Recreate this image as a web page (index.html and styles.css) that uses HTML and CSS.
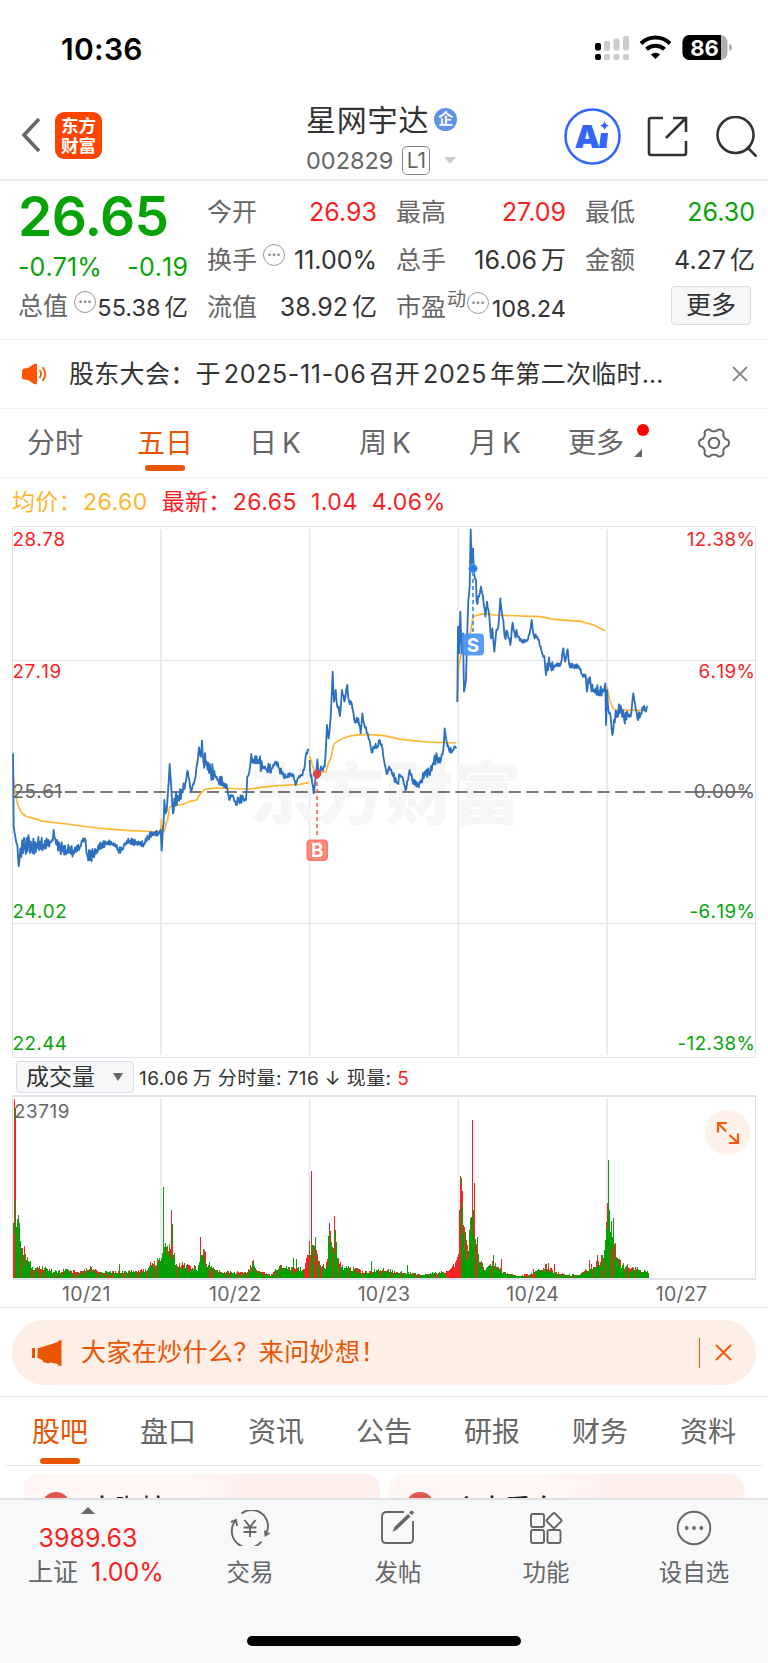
FILE: index.html
```
<!DOCTYPE html>
<html lang="zh-CN">

<head>
    <meta charset="UTF-8">
    <meta name="viewport" content="width=device-width, initial-scale=1.0">
    <title>星网宇达 002829</title>
    <link rel="stylesheet" href="styles.css">
</head>

<body>
    <div class="app">
        <div class="status-bar">
            <div class="time">10:36</div>
            <svg class="status-icons" width="140" height="28" viewBox="594 35 140 28">
                <g fill="#ccc">
                    <rect x="604" y="42" width="6" height="10" rx="2" />
                    <rect x="613.5" y="39.500" width="6" height="12" rx="2" />
                    <rect x="623" y="37" width="6" height="14.500" rx="2" />
                    <rect x="604" y="55" width="6" height="6" rx="2" />
                    <rect x="613.5" y="55" width="6" height="6" rx="2" />
                    <rect x="623" y="55" width="6" height="6" rx="2" />
                </g>
                <rect x="595" y="44" width="6" height="7.500" rx="2" />
                <rect x="595" y="55" width="6" height="6" rx="2" />
                <g fill="none" stroke="#000" stroke-width="4">
                    <path d="M641 44.500a20.500 20.500 0 0 1 29 0" />
                    <path d="M646.500 50.300a13 13 0 0 1 18 0" />
                </g>
                <path d="M655.500 60l-4.600-4.500a6.600 6.600 0 0 1 9.200 0z" />
                <rect x="682.500" y="36" width="45" height="25" rx="7" fill="#b0b0b0" />
                <path d="M689.500 36H721v25h-31.500a7 7 0 0 1-7-7V43a7 7 0 0 1 7-7z" />
                <path d="M729 45q3 1 3 3.500t-3 3.500z" fill="#b0b0b0" />
                <text x="704.500" y="56.500" class="battery-text" text-anchor="middle">86</text>
            </svg>
        </div>

        <div class="header">
            <div class="header-left">
                <svg width="20" height="36" viewBox="0 0 20 36">
                    <path d="M18 2L3 18l15 16" fill="none" stroke="#666" stroke-width="3.600" />
                </svg>
                <div class="logo">东方<br>财富</div>
            </div>
            <div class="stock">
                <div class="stock-name">星网宇达<span class="badge-qi">企</span></div>
                <div class="stock-code">002829<span class="level">L1</span><i class="caret"></i></div>
            </div>
            <div class="header-right">
                <svg width="57" height="57" viewBox="0 0 57 57" fill="#3366ff">
                    <circle cx="28.500" cy="28.500" r="27" fill="none" stroke="#3366ff" stroke-width="2.600" />
                    <text x="10.500" y="39.500" class="ai-text">A</text>
                    <path d="M37 25h7l-1.500 15h-7.500z" />
                    <path d="M40.500 13q1 4 4.500 4.500q-3.500 1-4.500 4.500q-1-3.500-4.500-4.500q3.500-.5 4.500-4.500z" />
                </svg>
                <svg class="share" width="41" height="41" viewBox="0 0 41 41" fill="none" stroke="#333" stroke-width="2.600">
                    <path d="M16 2H4Q2 2 2 4v33q0 2 2 2h33q2 0 2-2V25M26 2h13v14M39 2L19 22" />
                </svg>
                <svg width="41" height="41" viewBox="0 0 41 41" fill="none" stroke="#333" stroke-width="2.600">
                    <circle cx="19.500" cy="19" r="18" />
                    <path d="M31 31l9.500 9.500" />
                </svg>
            </div>
        </div>

        <div class="quote">
            <div class="col">
                <div class="price green">26.65</div>
                <div class="row row-change green"><span>-0.71%</span><span>-0.19</span></div>
                <div class="row"><span class="label">总值<i class="more-dot">•••</i></span><span class="small">55.38<b>亿</b></span></div>
            </div>
            <div class="col">
                <div class="row"><span class="label">今开</span><span class="red">26.93</span></div>
                <div class="row"><span class="label">换手<i class="more-dot">•••</i></span><span>11.00%</span></div>
                <div class="row"><span class="label">流值</span><span>38.92<b>亿</b></span></div>
            </div>
            <div class="col">
                <div class="row"><span class="label">最高</span><span class="red">27.09</span></div>
                <div class="row"><span class="label">总手</span><span>16.06<b>万</b></span></div>
                <div class="row"><span class="label">市盈<sup>动</sup><i class="more-dot pe">•••</i></span><span class="small">108.24</span></div>
            </div>
            <div class="col">
                <div class="row"><span class="label">最低</span><span class="green">26.30</span></div>
                <div class="row"><span class="label">金额</span><span>4.27<b>亿</b></span></div>
                <div class="row row-btn"><span class="more-btn">更多</span></div>
            </div>
        </div>

        <div class="notice">
            <svg width="28" height="24" viewBox="0 0 28 24">
                <path d="M1 9q0-2 2-2.500L7 6l6-4q3-1 3 1v18q0 2-3 1l-6-4-4-.5q-2 0-2-2z" fill="#ff5500" />
                <path d="M18.500 8q3 4 0 8M21.500 5q5.500 7 0 14" fill="none" stroke="#ff5500" stroke-width="1.800" />
            </svg>
            <div class="notice-text">股东大会：于<em>2025-11-06</em>召开<em>2025</em>年第二次临时…</div>
            <svg width="16" height="16" viewBox="0 0 16 16">
                <path d="M1 1l14 14M15 1L1 15" stroke="#888" stroke-width="1.800" />
            </svg>
        </div>

        <div class="period-tabs">
            <div class="period">分时</div>
            <div class="period active">五日</div>
            <div class="period">日<em>K</em></div>
            <div class="period">周<em>K</em></div>
            <div class="period">月<em>K</em></div>
            <div class="period">更多<i class="corner"></i></div>
            <div class="period">
                <svg width="34" height="34" viewBox="-17 -17 34 34" fill="none" stroke="#666" stroke-width="2">
                    <circle r="5.200" />
                    <path id="gear" stroke-linejoin="round" />
                </svg>
            </div>
        </div>

        <div class="legend"><span class="orange">均价：<em>26.60</em></span><span class="red">最新：<em>26.65</em><em>1.04</em><em>4.06%</em></span></div>

        <svg class="chart" width="768" height="532" viewBox="0 526 768 532">
            <g class="grid">
                <path d="M12.500 526.500H755.500V1057.500H12.500z" />
                <path d="M13 660.500H755M13 923.500H755" />
                <path d="M161 529V1055M309.500 529V1055M458.500 529V1055M607 529V1055" class="grid-day" />
            </g>
            <text x="385" y="819" class="watermark" text-anchor="middle">东方财富</text>
            <path d="M13 792H62" class="zero" />
            <path d="M65 792H693" class="zero" stroke-dasharray="12 5.750" />
            <path d="M685 792H748" class="zero" />
            <g transform="translate(0 400) scale(.33333)">
                <g id="avg" class="avg"></g>
                <g id="price" class="price-line"></g>
            </g>
            <path d="M317 775V838" stroke="#ff5b4d" stroke-width="1.600" stroke-dasharray="4 3" />
            <circle cx="317" cy="774" r="4.200" fill="#e04545" />
            <rect x="306.500" y="839.500" width="21.500" height="21.500" rx="4" fill="#ff7b6b" />
            <rect x="309.300" y="842.300" width="16" height="16" rx="3" class="mark-ring" />
            <text x="317.300" y="857" class="mark" text-anchor="middle">B</text>
            <path d="M473 572V633" stroke="#4a90f5" stroke-width="1.800" stroke-dasharray="4 3" />
            <circle cx="473" cy="568.500" r="4.400" fill="#2a7df0" stroke="#9cc4ff" stroke-width=".6" />
            <rect x="462" y="633.500" width="22" height="22" rx="4" fill="#4a94f8" fill-opacity=".92" />
            <text x="473" y="651.500" class="mark" text-anchor="middle">S</text>
            <g class="axis">
                <text x="12.500" y="545.500" class="up">28.78</text>
                <text x="12.500" y="678" class="up">27.19</text>
                <text x="12.500" y="798">25.61</text>
                <text x="12.500" y="917.500" class="down">24.02</text>
                <text x="12.500" y="1049.500" class="down">22.44</text>
                <g text-anchor="end">
                    <text x="755.500" y="545.500" class="up">12.38%</text>
                    <text x="755.500" y="678" class="up">6.19%</text>
                    <text x="755.500" y="798">0.00%</text>
                    <text x="755.500" y="917.500" class="down">-6.19%</text>
                    <text x="755.500" y="1049.500" class="down">-12.38%</text>
                </g>
            </g>
        </svg>

        <div class="vol-head">
            <div class="select">成交量<i class="arrow"></i></div>
            <div class="vol-text">16.06<b>万</b> 分时量: 716 ↓ 现量: <span class="red">5</span></div>
        </div>

        <div class="volume">
            <svg class="chart" width="768" height="185" viewBox="0 1095 768 185">
                <g class="grid">
                    <path d="M161 1098.500V1278M309.500 1098.500V1278M458.500 1098.500V1278M607 1098.500V1278" class="grid-day" />
                    <path d="M12.500 1096V1279M755.500 1096V1279" />
                    <path d="M12 1096H756M12 1279H756" class="grid-edge" />
                </g>
                <g id="bars" shape-rendering="crispEdges"></g>
                <text x="14" y="1118" class="vol-max">23719</text>
            </svg>
            <div class="expand">
                <svg width="24" height="24" viewBox="0 0 24 24" fill="none" stroke="#f25c0c" stroke-width="2.200">
                    <path d="M11 2H2v9.500M2 2l8 8.500M13 22h9v-9.500M22 22l-8.500-8" />
                </svg>
            </div>
        </div>
        <div class="dates">
            <span>10/21</span><span>10/22</span><span>10/23</span><span>10/24</span><span>10/27</span>
        </div>

        <div class="ask-wrap">
            <div class="ask">
                <svg width="31" height="28" viewBox="0 0 31 28" fill="#ea5504">
                    <path d="M0 9h3v10H0zM5.500 9.500L26 3V2l3-1h.5v26l-3.500-.5V25l-8-1.500-1.500 1-5.500-1.500-.5-2L5.500 19z" />
                </svg>
                <span class="ask-text">大家在炒什么？来问妙想！</span>
                <i class="ask-line"></i>
                <svg width="17" height="17" viewBox="0 0 17 17">
                    <path d="M1 1l15 15M16 1L1 16" stroke="#f25c0c" stroke-width="2" />
                </svg>
            </div>
        </div>

        <div class="info-tabs">
            <div class="info active">股吧</div>
            <div class="info">盘口</div>
            <div class="info">资讯</div>
            <div class="info">公告</div>
            <div class="info">研报</div>
            <div class="info">财务</div>
            <div class="info">资料</div>
        </div>

        <div class="cards">
            <div class="card"><i class="card-dot"></i><span>大咖榜</span></div>
            <div class="card"><i class="card-dot"></i><span>个大看盘</span></div>
        </div>

        <div class="bottom">
            <div class="nav">
                <div class="index">
                    <i class="tri"></i>
                    <div class="index-value red">3989.63</div>
                    <div class="index-name">上证<span class="red">1.00%</span></div>
                </div>
                <div class="nav-item">
                    <svg width="40" height="36" viewBox="0 0 40 36" fill="none" stroke="#666" stroke-width="1.900">
                        <path d="M11.500 3.500A16.300 16.300 0 0 1 36 24M31.500 31.500A16.300 16.300 0 0 1 5.500 10.500" />
                        <path d="M1 12l5-2 1 6M39.500 23l-4 2.500-.5-5" />
                        <path d="M14.500 10l5.500 7 5.500-7M20 17v10M13.500 17.500h13M13.500 22h13" />
                    </svg>
                    <span>交易</span>
                </div>
                <div class="nav-item">
                    <svg width="36" height="36" viewBox="0 0 36 36" fill="none" stroke="#666" stroke-width="1.900">
                        <path d="M24 2H7Q2 2 2 7v22q0 4 4 4h23q4 0 4-4V11" />
                        <path d="M12.500 22l2-5L28 4l2.500 2.500L17 19.500z" fill="#666" stroke="none" />
                        <path d="M29 3l1.500-2q2.500-1 3.500 1.500L32 5z" fill="#666" stroke="none" />
                    </svg>
                    <span>发帖</span>
                </div>
                <div class="nav-item">
                    <svg width="34" height="36" viewBox="0 0 34 36" fill="none" stroke="#666" stroke-width="1.900">
                        <rect x="2" y="4" width="13" height="13" rx="2" />
                        <rect x="2" y="20" width="13" height="13" rx="2" />
                        <rect x="18.500" y="20" width="13" height="13" rx="2" />
                        <path d="M24 3.500q1-1 2 0l6 6q1 1 0 2l-6 6q-1 1-2 0l-6-6q-1-1 0-2z" />
                    </svg>
                    <span>功能</span>
                </div>
                <div class="nav-item">
                    <svg width="36" height="36" viewBox="0 0 36 36" fill="#666">
                        <circle cx="18" cy="18" r="16.300" fill="none" stroke="#666" stroke-width="1.900" />
                        <circle cx="10.700" cy="18" r="1.900" />
                        <circle cx="18" cy="18" r="1.900" />
                        <circle cx="25.300" cy="18" r="1.900" />
                    </svg>
                    <span>设自选</span>
                </div>
            </div>
            <div class="home-bar"></div>
        </div>
    </div>
    <script src="chart.js"></script>
</body>

</html>
```
FILE: styles.css
```
* {
    box-sizing: border-box;
}

body {
    margin: 0;
    background-color: #fff;
    color: #333;
    font-family: Inter, "Noto Sans CJK SC", sans-serif;
    font-size: 25px;
    line-height: 1;
}

i,
em {
    font-style: normal;
}

b {
    font-weight: 400;
    margin-left: 4px;
}

svg {
    display: block;
    flex-shrink: 0;
}

.red {
    color: #fa1e1e;
}

.green {
    color: #06a306;
}

.orange {
    color: #ffb52e;
}

.app {
    width: 768px;
    height: 1663px;
    overflow: hidden;
    display: flex;
    flex-direction: column;
}

.app > * {
    flex-shrink: 0;
}

/* status bar */
.status-bar {
    height: 96px;
    padding: 34px 34px 0 61px;
    display: flex;
    justify-content: space-between;
    color: #000;
}

.time {
    font-size: 30px;
    font-weight: 600;
    line-height: 30px;
    letter-spacing: .3px;
}

.battery-text {
    font-size: 22px;
    font-weight: 700;
    fill: #fff;
}

/* header */
.header {
    height: 85px;
    border-bottom: 2px solid #ebebeb;
    display: grid;
    grid-template-columns: 306px 1fr auto;
}

.header-left {
    display: flex;
    gap: 14px;
    padding: 16px 0 0 21px;
}

.header-left svg {
    margin-top: 5px;
}

.logo {
    width: 47px;
    height: 47px;
    padding-top: 4px;
    border-radius: 9px;
    background-color: #ff4400;
    color: #fff;
    font-size: 17.500px;
    font-weight: 700;
    line-height: 19.500px;
    text-align: center;
}

.stock-name {
    display: flex;
    align-items: center;
    gap: 5px;
    height: 47px;
    font-size: 30px;
    letter-spacing: .8px;
}

.badge-qi {
    width: 23px;
    height: 23px;
    border-radius: 50%;
    background-color: #6190e8;
    color: #fff;
    font-size: 15px;
    font-weight: 700;
    line-height: 22px;
    letter-spacing: 0;
    text-align: center;
}

.stock-code {
    display: flex;
    align-items: center;
    height: 29px;
    margin-top: 3px;
    color: #666;
    font-size: 23.500px;
}

.level {
    width: 28px;
    height: 29px;
    margin-left: 9px;
    border: 1px solid #888;
    border-radius: 5px;
    font-size: 21px;
    line-height: 28px;
    text-align: center;
}

.caret {
    margin-left: 14px;
    border: 6.500px solid transparent;
    border-top: 7px solid #ccc;
    border-bottom: 0;
}

.header-right {
    display: flex;
    align-items: center;
    gap: 26px;
    padding: 0 11.500px 2px 0;
}

.share {
    margin-right: 2px;
}

.ai-text {
    font-family: Inter, sans-serif;
    font-size: 32px;
    font-weight: 900;
}

/* quote */
.quote {
    height: 159px;
    padding: 8px 13px 0 18px;
    border-bottom: 1px solid #efefef;
    display: grid;
    grid-template-columns: repeat(4, 1fr);
    column-gap: 19px;
}

.row {
    height: 47.500px;
    display: flex;
    align-items: center;
    justify-content: space-between;
    white-space: nowrap;
}

.price {
    height: 57px;
    font-size: 55px;
    font-weight: 600;
    line-height: 54px;
    letter-spacing: -.6px;
}

.row-change {
    height: 37px;
    padding-top: 5px;
    letter-spacing: .1px;
    font-kerning: none;
}

.label {
    display: flex;
    align-items: center;
    color: #666;
}

.label sup {
    margin: -16px 0 0 1px;
    font-size: 19px;
    line-height: 1;
}

.more-dot {
    width: 22px;
    height: 22px;
    margin: -10px 0 0 6px;
    border: 1.500px solid #999;
    border-radius: 50%;
    color: #888;
    font-size: 8px;
    line-height: 18px;
    text-align: center;
}

.more-dot.pe {
    margin-left: 1px;
}

.small {
    font-size: 23.500px;
    padding-top: 2px;
}

.row-btn {
    justify-content: flex-end;
    padding-right: 4px;
}

.more-btn {
    width: 80px;
    height: 39px;
    margin-top: -5px;
    border: 1px solid #d9dce3;
    border-radius: 4px;
    background-color: #f6f7f9;
    line-height: 36px;
    text-align: center;
}

/* notice */
.notice {
    height: 69px;
    padding: 0 20px 0 21px;
    border-bottom: 1px solid #f0f0f0;
    display: flex;
    align-items: center;
}

.notice-text {
    flex: 1;
    margin-left: 20px;
    letter-spacing: .3px;
    white-space: nowrap;
}

.notice-text em {
    margin: 0 3px;
    letter-spacing: .65px;
}

/* period tabs */
.period-tabs {
    height: 69px;
    border-bottom: 1px solid #f0f0f0;
    display: grid;
    grid-template-columns: repeat(6, 110px) 1fr;
}

.period {
    position: relative;
    display: flex;
    align-items: center;
    justify-content: center;
    color: #666;
    font-size: 28px;
}

.period em {
    margin-left: 5px;
}

.active {
    color: #ea5504;
}

.active::after {
    content: "";
    position: absolute;
    left: 50%;
    bottom: 6px;
    width: 40px;
    height: 6px;
    margin-left: -20px;
    border-radius: 3px;
    background-color: #ea5504;
}

.corner {
    margin: 20px 0 0 10px;
    border-left: 8px solid transparent;
    border-bottom: 8px solid #666;
}

.corner::after {
    content: "";
    position: absolute;
    top: 15px;
    right: 11px;
    width: 12px;
    height: 12px;
    border-radius: 50%;
    background-color: #f00;
}

/* chart */
.legend {
    height: 48px;
    padding: 1px 0 0 12px;
    display: flex;
    align-items: center;
    gap: 14px;
    font-size: 23px;
    letter-spacing: .3px;
}

.legend em {
    margin: 0 13px 0 1px;
    letter-spacing: .5px;
}

.legend .orange em {
    margin-right: 0;
}

.grid {
    fill: none;
    stroke: #dfe2e8;
}

.grid-day {
    stroke: #e6eaf0;
    stroke-width: 1.800;
}

.grid-edge {
    stroke-width: 2;
}

.watermark {
    fill: #f6f6f6;
    font-size: 68px;
    font-weight: 900;
}

.zero {
    stroke: #777;
    stroke-width: 2;
}

.avg,
.price-line {
    fill: none;
    stroke: #ffb52e;
    stroke-width: 5;
    stroke-linejoin: round;
}

.price-line {
    stroke: #2c70bf;
    stroke-width: 5.500;
}

.mark {
    fill: #fff;
    font-size: 19px;
    font-weight: 700;
}

.mark-ring {
    fill: none;
    stroke: #fff;
    stroke-width: .5;
    stroke-opacity: .6;
}

.axis {
    fill: #666;
    font-size: 18.800px;
    font-kerning: none;
    letter-spacing: .45px;
}

.up {
    fill: #fa1e1e;
}

.down {
    fill: #06a306;
}

.vol-head {
    height: 37px;
    padding: 1px 0 0 16px;
    display: flex;
    align-items: center;
    gap: 5px;
}

.select {
    width: 118px;
    height: 32px;
    padding: 0 10px 0 9px;
    border: 1px solid #d9dce3;
    border-radius: 4px;
    background-color: #f6f7f9;
    display: flex;
    align-items: center;
    justify-content: space-between;
    font-size: 23px;
}

.arrow {
    border: 5px solid transparent;
    border-top: 8px solid #666;
    border-bottom: 0;
}

.vol-text {
    padding-top: 2px;
    font-size: 19px;
    letter-spacing: .4px;
    white-space: pre;
}

.volume {
    position: relative;
}

.vol-max {
    fill: #666;
    font-size: 18.800px;
    letter-spacing: .6px;
}

.expand {
    position: absolute;
    top: 15px;
    right: 18px;
    width: 45px;
    height: 45px;
    border-radius: 50%;
    background-color: #fdf1ea;
    display: flex;
    align-items: center;
    justify-content: center;
}

.dates {
    height: 28px;
    padding: 0 12px;
    border-bottom: 1px solid #e6e6e6;
    display: grid;
    grid-template-columns: repeat(5, 1fr);
    color: #666;
    font-size: 19.500px;
    letter-spacing: .3px;
    line-height: 29px;
    text-align: center;
}

/* ask banner */
.ask-wrap {
    height: 89px;
    padding: 12px 12px 0;
    border-bottom: 1px solid #dfe2ea;
}

.ask {
    height: 65px;
    padding: 0 24px 0 20px;
    border-radius: 33px;
    background-color: #fdeee6;
    color: #ea5504;
    display: flex;
    align-items: center;
}

.ask-text {
    flex: 1;
    margin-left: 18px;
    letter-spacing: .4px;
}

.ask-line {
    width: 1.500px;
    height: 30px;
    margin-right: 15px;
    background-color: #ea5504;
}

/* info tabs */
.info-tabs {
    height: 69px;
    margin: 0 6px;
    border-bottom: 1px solid #e6e6e6;
    display: grid;
    grid-template-columns: repeat(7, 1fr);
}

.info {
    position: relative;
    color: #666;
    font-size: 28px;
    line-height: 71px;
    text-align: center;
}

.info.active {
    color: #ea5504;
}

.info.active::after {
    bottom: 4px;
}

.cards {
    height: 32px;
    padding: 8px 24px 0;
    display: grid;
    grid-template-columns: 1fr 1fr;
    gap: 8px;
    overflow: hidden;
}

.card {
    height: 90px;
    padding: 18px 18px 0;
    border-radius: 14px;
    background: linear-gradient(100deg, #fff7f5 45%, #fff0ee 60%);
    color: #222;
    display: flex;
    gap: 19px;
    font-size: 26px;
    font-weight: 500;
}

.card span {
    padding-top: 4px;
}

.card-dot {
    width: 28px;
    height: 28px;
    border-radius: 50%;
    background-color: #e25650;
}

/* bottom bar */
.bottom {
    flex: 1;
    border-top: 2px solid #dfe1e4;
    background-color: #f7f8fa;
}

.nav {
    height: 136px;
    display: grid;
    grid-template-columns: 176px repeat(4, 1fr);
    color: #666;
    font-size: 23.500px;
}

.index {
    display: flex;
    flex-direction: column;
    align-items: center;
}

.tri {
    margin: 7px 0 12px;
    border: 7px solid transparent;
    border-bottom: 7px solid #666;
    border-top: 0;
}

.index-value,
.index-name {
    height: 34px;
    font-size: 25px;
}

.index-name {
    padding-left: 15px;
    align-self: stretch;
    margin-left: 13px;
}

.index-name span {
    margin-left: 13px;
}

.nav-item {
    display: flex;
    flex-direction: column;
    align-items: center;
    padding-top: 10px;
    gap: 15px;
}

.home-bar {
    width: 274px;
    height: 10px;
    margin: 0 auto;
    border-radius: 5px;
    background-color: #000;
}
```
FILE: chart.js
```
// small seeded generator so the lines look the same on every load
let seed = 7;
const rand = () => {
    seed = (seed * 16807) % 2147483647;
    return seed / 2147483647;
};

const NS = "http://www.w3.org/2000/svg";
const add = (parent, tag, attrs) => {
    const el = document.createElementNS(NS, tag);
    for (const k in attrs) el.setAttribute(k, attrs[k]);
    document.getElementById(parent).appendChild(el);
};

// [x, y, noise]
const price = [
    [[39, 1060], [41, 1278], [46, 1310, 8], [52, 1335], [56, 1398], [61, 1345, 14], [75, 1340, 22], [88, 1325, 20], [95, 1345, 20],
    [110, 1330, 20], [130, 1335, 14], [150, 1325, 10], [158, 1322], [161, 1290], [166, 1318, 8], [180, 1345, 12], [200, 1352, 14],
    [220, 1352, 12], [240, 1340, 10], [250, 1315, 5], [257, 1322, 5], [262, 1365, 12], [280, 1368, 14], [290, 1350, 10], [305, 1330, 10],
    [318, 1328, 10], [335, 1332, 6], [350, 1335], [354, 1350], [366, 1350, 6], [375, 1330, 6], [390, 1322, 8], [410, 1326, 8],
    [432, 1332, 6], [445, 1312, 6], [460, 1298, 9], [475, 1300, 6], [482, 1290],
    [485, 1352], [489, 1280], [493, 1200, 20], [497, 1240], [503, 1190, 15], [509, 1092], [513, 1150], [519, 1240], [523, 1195, 14],
    [535, 1200, 14], [545, 1170, 14], [556, 1150, 14], [563, 1112], [568, 1140], [573, 1172, 6], [584, 1140], [592, 1090, 8],
    [597, 1042], [602, 1070], [606, 1022], [610, 1080, 10], [620, 1085, 16], [632, 1115, 16], [645, 1125, 18], [655, 1140],
    [670, 1148, 12], [682, 1165, 8], [688, 1200], [692, 1185], [700, 1190], [708, 1215], [716, 1200, 10], [730, 1195, 8], [738, 1200],
    [742, 1130], [748, 1115], [754, 1062], [760, 1080, 12], [775, 1080, 20], [790, 1100, 16], [800, 1108], [815, 1105, 10],
    [828, 1085], [838, 1105, 5], [850, 1125, 8], [860, 1130, 8], [872, 1122, 5], [880, 1125], [887, 1155], [893, 1135],
    [905, 1125, 4], [912, 1110], [919, 1058], [926, 1052]],
    [[929, 1080], [930, 1110], [934, 1125, 10], [941, 1180], [946, 1140], [952, 1078], [957, 1115, 8], [966, 1110, 12], [974, 1100],
    [978, 1040], [981, 975], [986, 1015], [992, 950], [998, 815], [1002, 905], [1007, 870], [1011, 915], [1016, 920], [1020, 948],
    [1026, 870], [1033, 905, 8], [1042, 855], [1047, 905, 8], [1055, 910], [1065, 968], [1075, 955, 6], [1082, 1000], [1087, 940],
    [1092, 970, 6], [1103, 1000], [1112, 1040], [1115, 1058], [1122, 1040, 6], [1132, 1040, 8], [1139, 1020], [1148, 1050, 6],
    [1152, 1080], [1160, 1122], [1168, 1100], [1176, 1120, 6], [1192, 1148, 8], [1200, 1125, 8], [1209, 1135], [1217, 1172],
    [1229, 1110], [1237, 1140, 6], [1254, 1158, 6], [1264, 1140, 8], [1274, 1115, 12], [1287, 1120, 12], [1298, 1090, 10],
    [1312, 1075, 14], [1320, 1088, 8], [1330, 1050], [1334, 985], [1340, 1025], [1347, 1050], [1357, 1052, 5], [1366, 1040], [1370, 1042]],
    [[1372, 906], [1374, 680], [1377, 760], [1381, 635], [1385, 760], [1389, 700], [1392, 875], [1398, 840], [1402, 690], [1405, 600],
    [1409, 560], [1412, 388], [1415, 490], [1419, 445], [1422, 520], [1428, 540], [1430, 605], [1437, 590, 8], [1443, 560], [1449, 590],
    [1456, 650], [1461, 605], [1468, 650], [1473, 715], [1477, 685], [1483, 755], [1489, 690], [1495, 680], [1501, 595], [1506, 640],
    [1510, 660], [1514, 710], [1522, 695, 10], [1531, 735], [1538, 668], [1544, 700], [1552, 705, 10], [1565, 725, 4], [1582, 722, 4],
    [1589, 700], [1595, 660], [1601, 705, 8], [1612, 710, 8], [1622, 740], [1627, 762], [1633, 768], [1638, 825], [1642, 790],
    [1652, 792, 14], [1662, 797, 12], [1682, 792, 4], [1690, 745], [1695, 785], [1703, 748], [1708, 795], [1720, 800, 5],
    [1736, 798, 4], [1747, 825, 4], [1757, 825], [1761, 875], [1765, 835], [1772, 850, 10], [1782, 870, 14], [1797, 872, 12],
    [1810, 875, 10], [1816, 850], [1818, 975], [1821, 870], [1825, 930], [1832, 950], [1837, 1005], [1842, 960, 12], [1852, 935, 16],
    [1864, 925, 14], [1872, 955, 14], [1884, 945, 12], [1892, 950], [1900, 880], [1905, 910], [1912, 955, 8], [1922, 940, 8],
    [1932, 918, 8], [1937, 935], [1941, 918]]
];

price.forEach(line => {
    let pts = [];
    line.forEach((p, i) => {
        pts.push(p[0] + "," + p[1]);
        const next = line[i + 1];
        if (!next) return;
        const noise = next[2] || 4;
        const n = Math.max(1, Math.round((next[0] - p[0]) / 2.6));
        for (let k = 1; k < n; k++) {
            const t = k / n;
            const side = k % 2 ? 1 : -1;
            const y = p[1] + (next[1] - p[1]) * t + side * (.35 + rand()) * noise * 1.15;
            pts.push((p[0] + (next[0] - p[0]) * t).toFixed(1) + "," + y.toFixed(1));
        }
    });
    add("price", "polyline", { points: pts.join(" ") });
});

const avg = [
    "M40 1125C46 1200 55 1250 90 1252L130 1264L200 1272L290 1284L380 1291L482 1296L484 1258L486 1296L493 1295L497 1275L503 1258L509 1222L518 1215L545 1214L570 1204L590 1200L600 1182L615 1168L650 1164L745 1167L820 1158L900 1153L926 1148",
    "M929 1068L937 1095L945 1120L978 1115L985 1090L994 1070L1000 1038Q1006 1020 1050 1008Q1090 1000 1152 1007L1202 1018L1282 1026L1369 1029",
    "M1372 906L1376 800L1380 780L1386 745L1408 720L1418 655Q1424 642 1462 641L1482 645L1622 650L1662 658L1742 664L1782 675L1815 692",
    "M1821 860L1828 895Q1836 930 1850 930L1937 931"
];
avg.forEach(d => add("avg", "path", { d: d }));

// volume envelope [x, height]
const env = [
    [39, 226], [44, 500], [48, 190], [58, 150], [64, 95], [75, 75], [85, 50], [100, 28], [130, 34], [160, 20], [200, 24], [240, 20],
    [265, 34], [300, 18], [350, 20], [400, 22], [440, 25], [455, 40], [480, 65], [488, 90], [500, 110], [512, 100], [520, 70], [530, 40],
    [570, 38], [593, 28], [600, 85], [612, 75], [622, 45], [645, 24], [680, 18], [740, 18], [755, 45], [775, 25], [810, 8], [830, 30],
    [850, 36], [880, 26], [912, 30], [923, 95], [935, 100], [945, 85], [955, 45], [977, 35], [985, 120], [1003, 130], [1012, 60],
    [1025, 35], [1060, 28], [1100, 18], [1150, 28], [1210, 16], [1260, 12], [1335, 18], [1365, 42], [1374, 90], [1379, 300], [1388, 210],
    [1395, 120], [1403, 90], [1411, 180], [1420, 170], [1428, 100], [1437, 60], [1450, 28], [1477, 45], [1490, 32], [1510, 20],
    [1550, 6], [1590, 12], [1640, 38], [1665, 16], [1710, 10], [1740, 12], [1770, 34], [1800, 48], [1813, 80], [1820, 200],
    [1830, 160], [1843, 140], [1850, 55], [1870, 38], [1900, 32], [1932, 22], [1947, 20]
];
const spikes = [
    [43, 538, 1], [46, 510, 0], [357, 42, 0], [449, 48, 1], [488, 274, 0], [514, 204, 1], [517, 162, 0], [599, 124, 1], [612, 84, 1],
    [760, 55, 1], [878, 60, 0], [887, 56, 0], [934, 322, 1], [946, 122, 0], [986, 165, 1], [989, 142, 0], [1003, 187, 1], [1006, 144, 0],
    [1114, 50, 0], [1221, 38, 0], [1379, 307, 1], [1383, 300, 0], [1386, 262, 1], [1417, 474, 1], [1423, 285, 1], [1430, 122, 0],
    [1478, 70, 0], [1504, 57, 1], [1600, 26, 1], [1643, 45, 1], [1662, 43, 1], [1768, 55, 1], [1790, 70, 1], [1804, 70, 1],
    [1821, 226, 1], [1824, 353, 0], [1827, 197, 1], [1839, 180, 0]
];
const bar = (x, h, red) => add("bars", "rect", {
    x: Math.round(x), y: Math.round(1278 - h), width: 1, height: Math.round(h), fill: red ? "#f52323" : "#06a006"
});
spikes.forEach(s => bar(s[0] / 3, s[1] / 3, s[2]));
for (let x = 13; x < 649; x++) {
    const i = env.findIndex((e, k) => env[k + 1] && x * 3 < env[k + 1][0]);
    const a = env[i], b = env[i + 1];
    const h = (a[1] + (b[1] - a[1]) * (x * 3 - a[0]) / (b[0] - a[0])) / 3;
    const opening = (x > 303 && x < 309) || (x > 445 && x < 459);
    bar(x, Math.max(2, h * (.7 + rand() * .5)), opening || rand() < .42);
    bar(x, Math.max(2, h * (.45 + rand() * .35)), opening || rand() < .12);
}

// gear outline, six soft teeth
let gear = "";
for (let a = 0; a < 360; a += 6) {
    const t = a * Math.PI / 180;
    const r = 13.3 + 1.7 * Math.tanh(2 * Math.cos(t * 6));
    gear += (a ? "L" : "M") + (r * Math.cos(t)).toFixed(2) + " " + (r * Math.sin(t)).toFixed(2);
}
document.getElementById("gear").setAttribute("d", gear + "Z");
```
